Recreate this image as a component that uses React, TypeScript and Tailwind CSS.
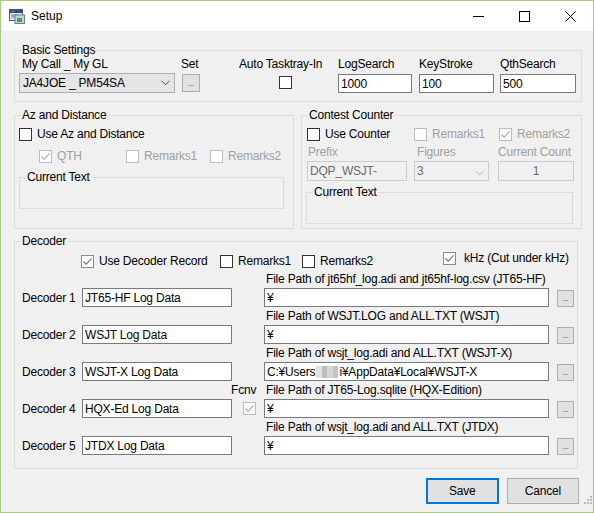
import React from "react";

type CheckProps = { checked?: boolean; disabled?: boolean; soft?: boolean };

function CheckBox({ checked = false, disabled = false, soft = false }: CheckProps) {
  const border = disabled
    ? "border-[#bcbcbc]"
    : soft
      ? "border-[#8c8c8c]"
      : "border-[#333333]";
  const stroke = disabled ? "#a8a8a8" : soft ? "#707070" : "#333333";
  return (
    <span
      className={`inline-flex h-[13px] w-[13px] shrink-0 items-center justify-center border bg-white ${border}`}
    >
      {checked && (
        <svg width="11" height="11" viewBox="0 0 11 11">
          <path d="M1.5 5.5 4.2 8.2 9.6 2.4" fill="none" stroke={stroke} strokeWidth="1.1" />
        </svg>
      )}
    </span>
  );
}

function CheckItem({
  label,
  checked,
  disabled,
  soft,
  className = "",
}: CheckProps & { label: string; className?: string }) {
  return (
    <div className={`flex h-[14px] items-center gap-[5px] ${className}`}>
      <CheckBox checked={checked} disabled={disabled} soft={soft} />
      <span className={disabled ? "text-[#a0a0a0]" : ""}>{label}</span>
    </div>
  );
}

function Group({
  title,
  className = "",
  children,
}: {
  title: string;
  className?: string;
  children?: React.ReactNode;
}) {
  return (
    <fieldset className={`border border-[#dcdcdc] ${className}`}>
      <legend className="ml-[6px] px-[1px] leading-[14px]">{title}</legend>
      {children}
    </fieldset>
  );
}

function Chevron({ color = "#444" }: { color?: string }) {
  return (
    <svg width="9" height="6" viewBox="0 0 9 6">
      <path d="M0.5 0.8 4.5 4.8 8.5 0.8" fill="none" stroke={color} strokeWidth="1" />
    </svg>
  );
}

function SmallButton() {
  return (
    <div className="flex h-[17px] w-[17px] items-end justify-center border border-[#adadad] bg-[#e1e1e1] pb-[3px] text-[8px] leading-[8px] text-[#333]">
      ...
    </div>
  );
}

function TextBox({ value, className = "" }: { value: React.ReactNode; className?: string }) {
  return (
    <div
      className={`flex h-[19px] items-center overflow-hidden whitespace-nowrap border border-[#7a7a7a] bg-white px-[2px] ${className}`}
    >
      {value}
    </div>
  );
}

function AppIcon() {
  return (
    <svg width="16" height="15" viewBox="0 0 16 15">
      <rect x="0.5" y="0.5" width="13" height="11" fill="#dfe6ee" stroke="#4a5d78" />
      <rect x="1" y="1" width="12" height="3" fill="#2c4a7a" />
      <path d="M2 2.5h4M2 6h6M2 8h5" stroke="#6b7f99" strokeWidth="1" />
      <rect x="6" y="6" width="9.5" height="8.5" fill="#c9d2dc" stroke="#6d7c8e" />
      <rect x="8" y="9" width="5" height="4" fill="#3aa35a" />
    </svg>
  );
}

const decoders = [
  {
    name: "JT65-HF Log Data",
    pathLabel: "File Path of jt65hf_log.adi and jt65hf-log.csv (JT65-HF)",
    path: "¥",
  },
  { name: "WSJT Log Data", pathLabel: "File Path of WSJT.LOG and ALL.TXT (WSJT)", path: "¥" },
  {
    name: "WSJT-X Log Data",
    pathLabel: "File Path of wsjt_log.adi and ALL.TXT (WSJT-X)",
    path: "wsjtx",
  },
  {
    name: "HQX-Ed Log Data",
    pathLabel: "File Path of JT65-Log.sqlite (HQX-Edition)",
    path: "¥",
    fcnv: true,
  },
  { name: "JTDX Log Data", pathLabel: "File Path of wsjt_log.adi and ALL.TXT (JTDX)", path: "¥" },
];

function WsjtxPath() {
  return (
    <span className="flex items-center">
      C:¥Users
      <span className="mx-[1px] inline-flex h-[12px] w-[22px]">
        <span className="h-full w-1/4 bg-[#e2e2e2]" />
        <span className="h-full w-1/4 bg-[#bdbdbd]" />
        <span className="h-full w-1/4 bg-[#d6d6d6]" />
        <span className="h-full w-1/4 bg-[#c4c4c4]" />
      </span>
      i¥AppData¥Local¥WSJT-X
    </span>
  );
}

export default function App() {
  return (
    <div className="flex h-[513px] w-[594px] flex-col border border-[#a6cd7f] bg-[#f0f0f0] font-['Liberation_Sans',Arial,sans-serif] text-[12px] leading-[14px] tracking-[-0.2px] text-black">
      {/* title bar */}
      <div className="flex h-[30px] shrink-0 items-center bg-white">
        <div className="ml-[8px] mt-[1px]">
          <AppIcon />
        </div>
        <span className="ml-[6px] tracking-normal">Setup</span>
        <div className="ml-auto flex h-full items-center">
          <div className="flex w-[46px] justify-center">
            <span className="mt-[1px] block h-[1px] w-[11px] bg-black" />
          </div>
          <div className="flex w-[46px] justify-center">
            <span className="block h-[11px] w-[11px] border border-black" />
          </div>
          <div className="flex w-[46px] justify-center">
            <svg width="11" height="11" viewBox="0 0 11 11">
              <path d="M0.5 0.5 10.5 10.5M10.5 0.5 0.5 10.5" stroke="#000" strokeWidth="1" />
            </svg>
          </div>
        </div>
      </div>

      {/* body */}
      <div className="flex flex-col pl-[13px] pt-[12px]">
        {/* Basic Settings */}
        <Group title="Basic Settings" className="w-[568px] pb-[8px]">
          <div className="flex">
            <div className="ml-[4px] flex w-[156px] flex-col">
              <span className="h-[14px] pl-[3px]">My Call _ My GL</span>
              <div className="mt-[2px] flex h-[20px] items-center justify-between border border-[#adadad] bg-[#e5e5e5] pl-[3px] pr-[4px]">
                <span>JA4JOE _ PM54SA</span>
                <Chevron />
              </div>
            </div>
            <div className="ml-[6px] flex w-[58px] flex-col">
              <span className="h-[14px]">Set</span>
              <div className="ml-[1px] mt-[3px] flex h-[18px] w-[18px] items-end justify-center border border-[#adadad] bg-[#e1e1e1] pb-[3px] text-[8px] leading-[8px] text-[#333]">
                ...
              </div>
            </div>
            <div className="flex w-[99px] flex-col">
              <span className="h-[14px] whitespace-nowrap">Auto Tasktray-In</span>
              <div className="ml-[40px] mt-[5px]">
                <CheckBox />
              </div>
            </div>
            <div className="flex w-[81px] flex-col">
              <span className="h-[14px]">LogSearch</span>
              <TextBox value="1000" className="mt-[3px] w-[74px]" />
            </div>
            <div className="flex w-[81px] flex-col">
              <span className="h-[14px]">KeyStroke</span>
              <TextBox value="100" className="mt-[3px] w-[75px]" />
            </div>
            <div className="flex w-[76px] flex-col">
              <span className="h-[14px]">QthSearch</span>
              <TextBox value="500" className="mt-[3px] w-[76px]" />
            </div>
          </div>
        </Group>

        <div className="mt-[6px] flex gap-[7px]">
          {/* Az and Distance */}
          <Group title="Az and Distance" className="h-[121px] w-[280px]">
            <CheckItem label="Use Az and Distance" className="ml-[4px] mt-[5px]" />
            <div className="ml-[24px] mt-[8px] flex">
              <CheckItem label="QTH" checked disabled className="w-[87px]" />
              <CheckItem label="Remarks1" disabled className="w-[84px]" />
              <CheckItem label="Remarks2" disabled />
            </div>
            <Group title="Current Text" className="ml-[4px] mt-[7px] h-[39px] w-[265px]" />
          </Group>

          {/* Contest Counter */}
          <Group title="Contest Counter" className="h-[121px] w-[281px]">
            <div className="ml-[5px] mt-[5px] flex">
              <CheckItem label="Use Counter" className="w-[107px]" />
              <CheckItem label="Remarks1" disabled className="w-[85px]" />
              <CheckItem label="Remarks2" checked disabled />
            </div>
            <div className="ml-[5px] mt-[4px] flex text-[#a0a0a0]">
              <div className="flex w-[107px] flex-col">
                <span className="h-[14px] pl-[1px]">Prefix</span>
                <div className="mt-[2px] flex h-[20px] w-[100px] items-center border border-[#cccccc] bg-[#f0f0f0] px-[2px] text-[#6d6d6d]">
                  DQP_WSJT-
                </div>
              </div>
              <div className="flex w-[84px] flex-col">
                <span className="h-[14px] pl-[3px]">Figures</span>
                <div className="mt-[2px] flex h-[20px] w-[75px] items-center justify-between border border-[#cccccc] bg-[#f0f0f0] pl-[2px] pr-[4px] text-[#6d6d6d]">
                  <span>3</span>
                  <span className="mt-[4px]">
                    <Chevron color="#b4b4b4" />
                  </span>
                </div>
              </div>
              <div className="flex w-[76px] flex-col">
                <span className="h-[14px] whitespace-nowrap">Current Count</span>
                <div className="mt-[2px] flex h-[20px] w-[76px] items-center justify-center border border-[#cccccc] bg-[#f0f0f0] text-[#6d6d6d]">
                  1
                </div>
              </div>
            </div>
            <Group title="Current Text" className="ml-[4px] mt-[4px] h-[39px] w-[267px]" />
          </Group>
        </div>

        {/* Decoder */}
        <Group title="Decoder" className="mt-[5px] w-[564px] pb-[13px]">
          <div className="ml-[66px] mt-[6px] flex">
            <CheckItem label="Use Decoder Record" checked soft className="w-[139px]" />
            <CheckItem label="Remarks1" className="w-[82px]" />
            <CheckItem label="Remarks2" className="w-[141px]" />
            <div className="-mt-[3px] flex h-[14px] items-center gap-[8px]">
              <CheckBox checked soft />
              <span>kHz (Cut under kHz)</span>
            </div>
          </div>
          <div className="mt-[4px] flex flex-col gap-[2px]">
            {decoders.map((d, i) => (
              <div
                key={d.name}
                className="ml-[7px] grid grid-cols-[60px_150px_32px_285px_8px_17px] grid-rows-[14px_19px] gap-y-[2px]"
              >
                <span />
                <span />
                <span className="-ml-[1px] whitespace-nowrap">{d.fcnv ? "Fcnv" : ""}</span>
                <span className="whitespace-nowrap pl-[2px]">{d.pathLabel}</span>
                <span />
                <span />
                <span className="flex items-center">Decoder {i + 1}</span>
                <TextBox value={d.name} />
                <div className="flex items-center pl-[11px]">
                  {d.fcnv && <CheckBox checked disabled />}
                </div>
                <TextBox value={d.path === "wsjtx" ? <WsjtxPath /> : d.path} />
                <span />
                <div className="mt-[2px]">
                  <SmallButton />
                </div>
              </div>
            ))}
          </div>
        </Group>

        {/* buttons */}
        <div className="mt-[9px] flex">
          <div className="ml-[412px] flex h-[26px] w-[73px] items-center justify-center border-2 border-[#0078d7] bg-[#e1e1e1]">
            Save
          </div>
          <div className="ml-[8px] flex h-[26px] w-[73px] items-center justify-center border border-[#adadad] bg-[#e1e1e1]">
            Cancel
          </div>
          <svg className="ml-[4px] mt-[17px]" width="10" height="10" viewBox="0 0 10 10">
            <rect x="7" y="1" width="2" height="2" fill="#b8b8b8" />
            <rect x="4" y="4" width="2" height="2" fill="#b8b8b8" />
            <rect x="7" y="4" width="2" height="2" fill="#b8b8b8" />
            <rect x="1" y="7" width="2" height="2" fill="#b8b8b8" />
            <rect x="4" y="7" width="2" height="2" fill="#b8b8b8" />
            <rect x="7" y="7" width="2" height="2" fill="#b8b8b8" />
          </svg>
        </div>
      </div>
    </div>
  );
}
